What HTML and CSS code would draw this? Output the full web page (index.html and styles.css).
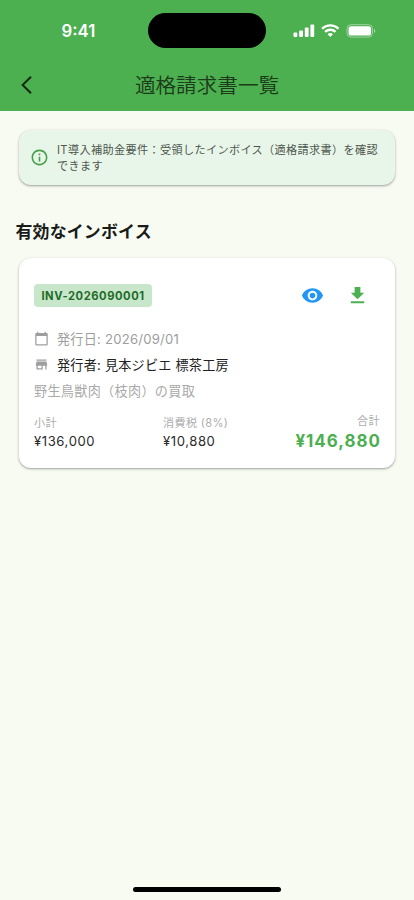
FILE: index.html
```html
<!DOCTYPE html>
<html lang="ja">
<head>
<meta charset="utf-8">
<meta name="viewport" content="width=device-width, initial-scale=1">
<title>適格請求書一覧</title>
<link rel="stylesheet" href="styles.css">
</head>
<body>
<div class="screen">
  <header class="header">
    <div class="status">
      <span class="time">9:41</span>
      <span class="island"></span>
      <span class="indicators">
        <svg width="83" height="16" viewBox="0 0 83 16" fill="#fff">
          <rect x="0.5" y="9.5" width="3.8" height="4.6" rx="1"/>
          <rect x="6.2" y="7.4" width="3.8" height="6.7" rx="1"/>
          <rect x="11.8" y="4.6" width="3.8" height="9.5" rx="1"/>
          <rect x="17.4" y="1.4" width="3.8" height="12.7" rx="1"/>
          <g fill="none" stroke="#fff" stroke-width="2.3">
            <path d="M29.1 5.7a11.7 11.7 0 0 1 16.4 0"/>
            <path d="M32.1 8.9a7.4 7.4 0 0 1 10.4 0"/>
          </g>
          <path d="M37.3 14l-2.7-2.8a4 4 0 0 1 5.4 0z"/>
          <rect x="54" y="1.7" width="25.5" height="12.4" rx="4" fill="none" stroke="#fff" stroke-opacity=".45"/>
          <rect x="55.5" y="3.3" width="22.6" height="9.2" rx="2.6"/>
          <path d="M81 5.9v4a2.2 2.2 0 0 0 0-4z" opacity=".5"/>
        </svg>
      </span>
    </div>
    <div class="appbar">
      <svg class="back" width="14" height="20" viewBox="0 0 14 20" fill="none" stroke="#14290f" stroke-width="2"><path d="M12 1.7L3.600 10l8.400 8.300"/></svg>
      <h1>適格請求書一覧</h1>
    </div>
  </header>

  <main>
    <section class="notice">
      <svg width="19" height="19" viewBox="0 0 24 24" fill="#43a047"><path d="M11 7h2v2h-2zm0 4h2v6h-2zm1-9C6.480 2 2 6.480 2 12s4.480 10 10 10 10-4.480 10-10S17.520 2 12 2zm0 18c-4.410 0-8-3.590-8-8s3.590-8 8-8 8 3.590 8 8-3.590 8-8 8z"/></svg>
      <p>IT導入補助金要件：受領したインボイス（適格請求書）を確認<br>できます</p>
    </section>

    <h2>有効なインボイス</h2>

    <article class="card">
      <div class="top">
        <span class="badge">INV-2026090001</span>
        <span class="actions">
          <svg width="23" height="23" viewBox="0 0 24 24" fill="#2196f3"><path d="M12 4.500C7 4.500 2.730 7.610 1 12c1.730 4.390 6 7.500 11 7.500s9.270-3.110 11-7.500c-1.730-4.390-6-7.500-11-7.500zM12 17c-2.760 0-5-2.240-5-5s2.240-5 5-5 5 2.240 5 5-2.240 5-5 5zm0-8c-1.660 0-3 1.340-3 3s1.340 3 3 3 3-1.340 3-3-1.340-3-3-3z"/></svg>
          <svg width="23" height="23" viewBox="0 0 24 24" fill="#4caf50"><path d="M19 9h-4V3H9v6H5l7 7 7-7zM5 18v2h14v-2H5z"/></svg>
        </span>
      </div>
      <div class="row date">
        <svg width="15" height="15" viewBox="0 0 24 24" fill="#9e9e9e"><path d="M20 3h-1V1h-2v2H7V1H5v2H4c-1.100 0-2 .9-2 2v16c0 1.100.9 2 2 2h16c1.100 0 2-.9 2-2V5c0-1.100-.9-2-2-2zm0 18H4V8h16v13z"/></svg>
        <span>発行日: 2026/09/01</span>
      </div>
      <div class="row issuer">
        <svg width="15" height="15" viewBox="0 0 24 24" fill="#9e9e9e"><path d="M20 4H4v2h16V4zm1 10v-2l-1-5H4l-1 5v2h1v6h10v-6h4v6h2v-6h1zm-9 4H6v-4h6v4z"/></svg>
        <span>発行者: 見本ジビエ 標茶工房</span>
      </div>
      <p class="desc">野生鳥獣肉（枝肉）の買取</p>
      <div class="amounts">
        <div class="amount"><span class="label">小計</span><span class="value">¥136,000</span></div>
        <div class="amount"><span class="label">消費税 (8%)</span><span class="value">¥10,880</span></div>
        <div class="amount total"><span class="label">合計</span><span class="value">¥146,880</span></div>
      </div>
    </article>
  </main>
  <div class="home"></div>
</div>
</body>
</html>
```
FILE: styles.css
```css
* { box-sizing: border-box; }
body {
  margin: 0;
  font-family: Inter, "Noto Sans CJK JP", sans-serif;
  color: #1a1c19;
}
h1, h2, p { margin: 0; }
svg { display: block; flex: none; }
.screen {
  height: 900px;
  background: #f8fbf2;
  display: flex;
  flex-direction: column;
  overflow: hidden;
}
.header {
  height: 111px;
  background: #4caf50;
  flex: none;
}
.status {
  height: 60px;
  padding-top: 13px;
  display: grid;
  grid-template-columns: 148px 118px 148px;
}
.time {
  padding-left: 61.5px;
  font-size: 16.8px;
  line-height: 36px;
  font-weight: 600;
  color: #fff;
}
.island {
  height: 35px;
  border-radius: 18px;
  background: #000;
}
.indicators { padding: 10px 0 0 27px; }
.appbar {
  height: 50px;
  display: grid;
  grid-template-columns: 48px 1fr 48px;
  align-items: center;
}
.back { margin-left: 19px; }
h1 {
  padding-top: 1px;
  text-align: center;
  font-size: 20.6px;
  line-height: 30px;
  font-weight: 350;
  color: #1c3a1a;
  white-space: nowrap;
}
main { flex: 1; }
.notice {
  margin: 19px 19px 0;
  height: 55px;
  padding: 0 12px 0 11px;
  display: flex;
  align-items: center;
  gap: 8px;
  border-radius: 12px;
  background: #e8f5e9;
  box-shadow: 0 1px 2px rgba(0,0,0,.3), 0 1px 3px 1px rgba(0,0,0,.06);
}
.notice p {
  padding-top: 1px;
  font-size: 11.15px;
  line-height: 16px;
  letter-spacing: .36px;
  color: #4d574d;
  white-space: nowrap;
}
h2 {
  margin: 34px 0 0 15.5px;
  font-size: 16.9px;
  line-height: 26px;
  font-weight: 600;
  letter-spacing: .2px;
}
.card {
  margin: 13px 19px 0;
  height: 210px;
  padding: 22px 15px 0;
  border-radius: 12px;
  background: #fff;
  box-shadow: 0 1px 2px rgba(0,0,0,.3), 0 1px 3px 1px rgba(0,0,0,.06);
}
.top {
  display: flex;
  justify-content: space-between;
  align-items: center;
  height: 31px;
}
.badge {
  width: 118px;
  padding-top: 1px;
  border-radius: 4px;
  background: #c8e6c9;
  color: #1f6b2a;
  font-size: 11.2px;
  font-weight: 650;
  line-height: 22px;
  letter-spacing: .55px;
  text-align: center;
}
.actions { display: flex; gap: 22px; padding-right: 11px; }
.row {
  display: flex;
  align-items: center;
  gap: 8px;
  height: 26px;
  font-size: 13.1px;
  letter-spacing: .24px;
  white-space: nowrap;
}
.date { margin-top: 14px; color: #9e9e9e; }
.issuer { color: #222; font-weight: 400; }
.desc {
  color: #aaa;
  font-size: 13.1px;
  letter-spacing: .33px;
  line-height: 26px;
  padding-top: 1px;
}
.amounts {
  display: grid;
  grid-template-columns: 129px 110px 1fr;
  margin-top: 9px;
}
.amount { display: flex; flex-direction: column; padding-top: 2px; }
.label {
  color: #adadad;
  font-size: 11.1px;
  line-height: 17px;
  letter-spacing: .36px;
}
.value {
  font-size: 13.1px;
  line-height: 18px;
  letter-spacing: .58px;
  color: #2b2b2b;
}
.total { padding-top: 0; text-align: right; }
.total .label { line-height: 16px; }
.total .value {
  color: #4caf50;
  font-size: 16.9px;
  line-height: 24px;
  font-weight: 650;
  letter-spacing: 1px;
  margin-right: -.8px;
}
.home {
  width: 148px;
  height: 5px;
  margin: 0 auto 8px;
  border-radius: 3px;
  background: #000;
}
```
